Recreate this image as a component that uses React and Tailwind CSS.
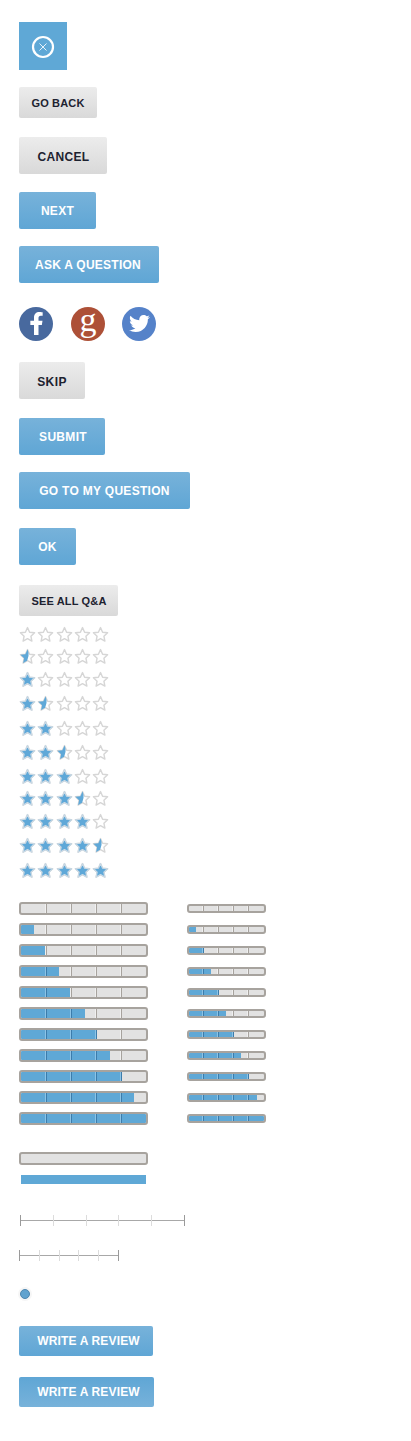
import { FaFacebookF, FaTwitter } from "react-icons/fa";

const font = { fontFamily: '"Liberation Sans", Arial, sans-serif' };

const blue = "bg-gradient-to-b from-[#77b2da] to-[#5fa6d5] text-white";
const blueUp = "bg-gradient-to-b from-[#5fa6d5] to-[#77b2da] text-white";
const gray = "bg-gradient-to-b from-[#ececec] to-[#d9d9d9] pt-[2px] text-[#1d2230]";

const Btn = ({ label, className }) => (
    <button className={`flex items-center justify-center rounded-[2px] font-bold ${className}`}>
        {label}
    </button>
);

const STAR_PATH = "M8.5 1.6l2.1 4.6 5 .6-3.7 3.4 1 4.9-4.4-2.5-4.4 2.5 1-4.9L1.4 6.8l5-.6z";

const Star = ({ fill, id }) => (
    <svg width="17" height="17" viewBox="0 0 17 17" className="shrink-0">
        <path d={STAR_PATH} fill="#fff" stroke="#d6d6d6" strokeWidth="1.4" strokeLinejoin="round" />
        {fill === 1 && <path d={STAR_PATH} fill="#5fa8d8" stroke="#c8d8e4" strokeWidth="1.3" strokeLinejoin="round" />}
        {fill === 0.5 && (
            <>
                <clipPath id={id}>
                    <path d="M0 0H9.5V8L7.5 15H0z" />
                </clipPath>
                <path d={STAR_PATH} fill="#5fa8d8" clipPath={`url(#${id})`} />
            </>
        )}
    </svg>
);

const starRows = [
    ["mt-[10px]", 0],
    ["mt-[5px]", 0.5],
    ["mt-[6px]", 1],
    ["mt-[7px]", 1.5],
    ["mt-[8px]", 2],
    ["mt-[7px]", 2.5],
    ["mt-[7px]", 3],
    ["mt-[5px]", 3.5],
    ["mt-[6px]", 4],
    ["mt-[7px]", 4.5],
    ["mt-[8px]", 5],
];

const StarRow = ({ value, className }) => (
    <div className={`flex gap-[1.3px] ${className}`}>
        {[0, 1, 2, 3, 4].map((i) => (
            <Star key={i} id={`half-${value}-${i}`} fill={value >= i + 1 ? 1 : value >= i + 0.5 ? 0.5 : 0} />
        ))}
    </div>
);

const Bar = ({ fill, ticks, size }) => (
    <div className={`relative overflow-hidden rounded-[3px] border-2 border-[#a7a39e] bg-[#e2e2e2] ${size}`}>
        <div className="absolute left-0 top-0 h-full bg-[#5fa8d6]" style={{ width: fill }} />
        {ticks.map((t) => (
            <div key={t} className="absolute top-0 flex h-full" style={{ left: t - 1 }}>
                <div className={`w-px ${t < fill ? "bg-[#8cc3e6]" : "bg-[#f0f0f0]"}`} />
                <div className={`w-px ${t < fill ? "bg-[#3c7cab]" : "bg-[#a7a39e]"}`} />
            </div>
        ))}
    </div>
);

const bigFills = [0, 13, 25, 38, 50, 64, 76, 89, 101, 113, 125];
const smallFills = [0, 7, 15, 22, 30, 37, 45, 52, 60, 68, 75];

const Ruler = ({ className }) => (
    <div className={`relative flex h-[11px] items-center justify-between ${className}`}>
        <div className="absolute left-0 right-0 top-[5px] h-px bg-[#a8a8a8]" />
        <div className="z-10 h-full w-px bg-[#9a9a9a]" />
        <div className="z-10 h-full w-px bg-[#dcdcdc]" />
        <div className="z-10 h-full w-px bg-[#dcdcdc]" />
        <div className="z-10 h-full w-px bg-[#dcdcdc]" />
        <div className="z-10 h-full w-px bg-[#dcdcdc]" />
        <div className="z-10 h-full w-px bg-[#9a9a9a]" />
    </div>
);

export default function App() {
    return (
        <div className="flex min-h-[1441px] flex-col items-start bg-white pl-[19px] pt-[22px]" style={font}>
            <div className="flex h-12 w-12 items-center justify-center bg-[#5fa8d6]">
                <svg width="24" height="24" viewBox="0 0 24 24" fill="none" stroke="#fff" className="mr-px mt-[1px]">
                    <circle cx="12" cy="12" r="10" strokeWidth="2.2" />
                    <path d="M8.5 8.5l7 7M15.5 8.5l-7 7" strokeWidth="1" strokeOpacity="0.85" />
                </svg>
            </div>

            <Btn label="GO BACK" className={`mt-[17px] h-[31px] w-[78px] text-[11px] tracking-[0.15px] ${gray}`} />
            <Btn label="CANCEL" className={`mt-[19px] h-[37px] w-[88px] pl-px text-[12px] tracking-[0.3px] ${gray}`} />
            <Btn label="NEXT" className={`mt-[18px] h-[37px] w-[77px] text-[12px] tracking-[0.3px] ${blue}`} />
            <Btn label="ASK A QUESTION" className={`mt-[17px] h-[37px] w-[140px] pr-[2px] text-[12px] tracking-[0.25px] ${blue}`} />

            <div className="mt-[23px] flex h-[35px] items-center">
                <div className="flex h-[34px] w-[34px] items-center justify-center rounded-full bg-[#48699e] text-white">
                    <FaFacebookF size={23} />
                </div>
                <div className="ml-[18px] flex h-[34px] w-[34px] items-center justify-center rounded-full bg-[#ad5037] pb-[7px] text-[34px] font-normal leading-none text-white" style={{ fontFamily: '"Liberation Serif", serif' }}>
                    g
                </div>
                <div className="ml-[17px] flex h-[34px] w-[34px] items-center justify-center rounded-full bg-[#5582c9] text-white">
                    <FaTwitter size={21} />
                </div>
            </div>

            <Btn label="SKIP" className={`mt-[21px] h-[37px] w-[66px] text-[12px] tracking-[0.4px] ${gray}`} />
            <Btn label="SUBMIT" className={`mt-[19px] h-[37px] w-[86px] pl-[2px] text-[12px] tracking-[0.3px] ${blue}`} />
            <Btn label="GO TO MY QUESTION" className={`mt-[17px] h-[37px] w-[171px] text-[12px] tracking-[0.3px] ${blue}`} />
            <Btn label="OK" className={`mt-[19px] h-[37px] w-[57px] text-[12px] tracking-[0.3px] ${blue}`} />
            <Btn label="SEE ALL Q&A" className={`mt-5 h-[31px] w-[99px] pl-px text-[11px] tracking-[0.15px] ${gray}`} />

            {starRows.map(([mt, value]) => (
                <StarRow key={value} value={value} className={mt} />
            ))}

            <div className="mt-[23px] flex gap-[39px]">
                <div className="flex flex-col gap-2">
                    {bigFills.map((f) => (
                        <Bar key={f} fill={f} ticks={[25, 50, 75, 100]} size="h-[13px] w-[129px]" />
                    ))}
                </div>
                <div className="flex flex-col gap-3 pt-[2px]">
                    {smallFills.map((f) => (
                        <Bar key={f} fill={f} ticks={[14, 29, 44, 59]} size="h-[9px] w-[79px]" />
                    ))}
                </div>
            </div>

            <Bar fill={0} ticks={[]} size="mt-[27px] h-[13px] w-[129px]" />
            <div className="ml-[2px] mt-[10px] h-[9px] w-[125px] bg-[#5fa8d6]" />

            <Ruler className="ml-px mt-[31px] w-[165px]" />
            <Ruler className="mt-[24px] w-[100px]" />

            <div className="-ml-px mt-[26px] flex h-[14px] w-[14px] items-center justify-center rounded-full bg-[#f6f6f6]">
                <div className="h-[10px] w-[10px] rounded-full border border-[#4f87b0] bg-[#62a3cf]" />
            </div>

            <Btn label="WRITE A REVIEW" className={`mt-[25px] h-[30px] w-[134px] pl-[5px] text-[12px] tracking-[0.15px] ${blue}`} />
            <Btn label="WRITE A REVIEW" className={`mt-[21px] h-[30px] w-[135px] pl-[4px] text-[12px] tracking-[0.15px] ${blueUp}`} />
        </div>
    );
}
